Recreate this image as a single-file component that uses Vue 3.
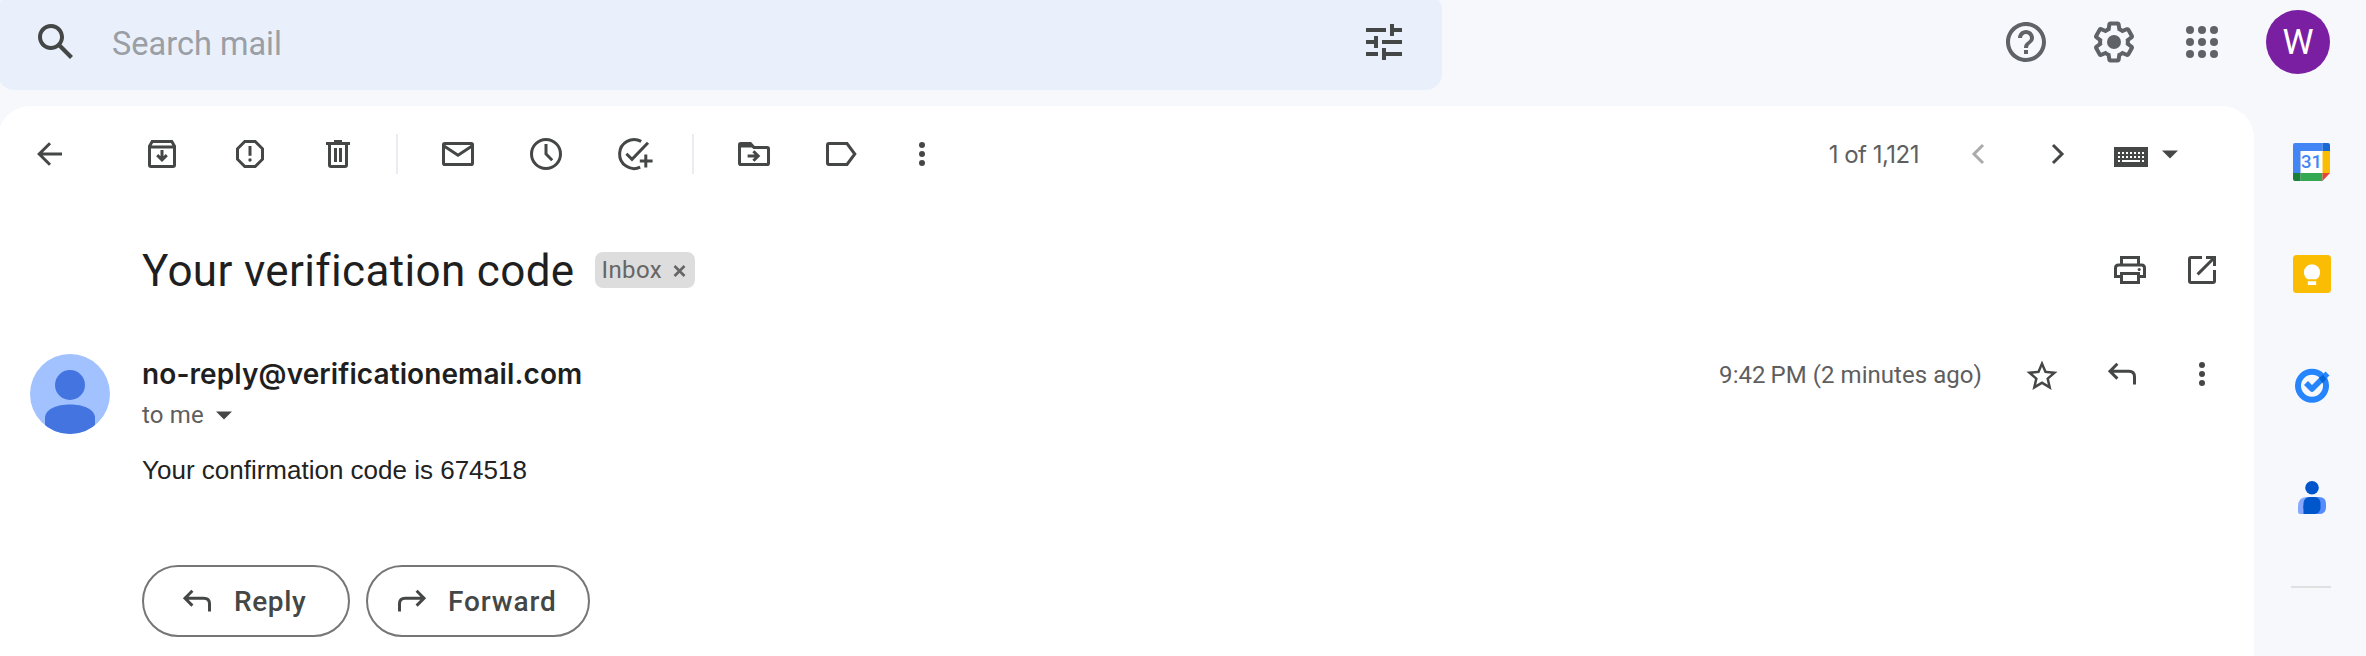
<script setup>
const icons = {
  back: '<path d="M16 10H4.8M10 4.6 4.6 10l5.4 5.4"/>',
  archive: '<path d="M3.75 6.1v9.4q0 .75.75.75h11q.75 0 .75-.75V6.1L14.9 3.75H5.1zM3.75 6.5h12.5M10 8v4.6M7.6 10.6l2.4 2.3 2.4-2.3"/>',
  spam: '<path d="M7.4 3.75h5.2l3.65 3.65v5.2l-3.65 3.65H7.4L3.75 12.6V7.4z"/><path d="M10 6v4.9"/><circle cx="10" cy="13" r=".85" class="f"/>',
  trash: '<path d="M5.75 5v10.5q0 .75.75.75h7q.75 0 .75-.75V5M4 4.75h12M8 3.75h4M8.75 7v7M11.25 7v7"/>',
  mail: '<path d="M3.4 4.75h13.2q.65 0 .65.65v9.2q0 .65-.65.65H3.4q-.65 0-.65-.65V5.4q0-.65.65-.65zM3 6l7 4.6L17 6"/>',
  clock: '<circle cx="10" cy="10" r="7.25"/><path d="M10 5v5l3.1 3.1"/>',
  task: '<path d="M13.6 3.7A7.25 7.25 0 1 0 13.1 16.6M6.2 9.9 9 12.7l8-8.3"/><path d="M15.9 10.3v6.4M12.9 13.5h6.4"/>',
  move: '<path d="M3.4 4.75h4.8l1.8 2h6.6q.65 0 .65.65v7.2q0 .65-.65.65H3.4q-.65 0-.65-.65V5.4q0-.65.65-.65z"/><path class="f" d="M2.6 4.6h5.6L10 6.8H2.6z"/><path d="M6.8 11h5.2M9.7 8.6l2.4 2.4-2.4 2.4"/>',
  label: '<path d="M3.5 4.75h9l3.9 5.25-3.9 5.25h-9q-.75 0-.75-.75v-9q0-.75.75-.75z"/>',
  more: '<g class="f"><circle cx="10" cy="5.5" r="1.5"/><circle cx="10" cy="10" r="1.5"/><circle cx="10" cy="14.5" r="1.5"/></g>',
  prev: '<path d="M12.5 5.5 8 10l4.5 4.5"/>',
  next: '<path d="M7.5 5.5 12 10l-4.5 4.5"/>',
  print: '<path d="M5.75 7V3.75h8.5V7M5.75 13.25h-3V9q0-1.5 1.5-1.5h11.5q1.5 0 1.5 1.5v4.25h-3M5.75 11.75h8.5v4.5h-8.5z"/><circle cx="14.6" cy="9.75" r=".75" class="f"/>',
  open: '<path d="M10 3.75H4.5q-.75 0-.75.75v11q0 .75.75.75h11q.75 0 .75-.75V10M12 3.75h4.25V8M16 4 7.8 12.2"/>',
  star: '<path class="f" transform="translate(.7 1.7) scale(.775)" d="M22 9.24l-7.19-.62L12 2 9.19 8.63 2 9.24l5.46 4.73L5.82 21 12 17.27 18.18 21l-1.63-7.03L22 9.24zM12 15.4l-3.76 2.27 1-4.28-3.32-2.88 4.38-.38L12 6.1l1.71 4.04 4.38.38-3.32 2.88 1 4.28L12 15.4z"/>',
  reply: '<path d="M7.7 4.9 4 8.6l3.7 3.7M4.2 8.6h9.2q2.85 0 2.85 2.85v3.85"/>',
  forward: '<path d="M12.3 4.9 16 8.6l-3.7 3.7M15.8 8.6H6.6q-2.85 0-2.85 2.85v3.85"/>'
}
const groups = [['archive', 'spam', 'trash'], ['mail', 'clock', 'task'], ['move', 'label']]
const keyCols = [0, 1, 2, 3, 4, 5, 6]
const dots = [6, 12, 18]
</script>

<template>
  <div class="app">
    <header class="header">
      <div class="search">
        <svg class="big dark" viewBox="0 0 24 24"><path d="M20.49,19l-5.73-5.73C15.53,12.2,16,10.91,16,9.5C16,5.91,13.09,3,9.5,3S3,5.91,3,9.5C3,13.09,5.91,16,9.5,16c1.41,0,2.7-0.47,3.77-1.24L19,20.49L20.49,19z M5,9.5C5,7.01,7.01,5,9.5,5S14,7.01,14,9.5S11.99,14,9.5,14S5,11.99,5,9.5z"/></svg>
        <span class="placeholder">Search mail</span>
        <svg class="big dark" viewBox="0 0 24 24"><path d="M3 17v2h6v-2H3zM3 5v2h10V5H3zm10 16v-2h8v-2h-8v-2h-2v6h2zM7 9v2H3v2h4v2h2V9H7zm14 4v-2H11v2h10zm-6-4h2V7h4V5h-4V3h-2v6z"/></svg>
      </div>
      <div class="tools">
        <svg class="big" viewBox="0 0 24 24"><path d="M11 18h2v-2h-2v2zm1-16C6.48 2 2 6.48 2 12s4.48 10 10 10 10-4.48 10-10S17.52 2 12 2zm0 18c-4.41 0-8-3.59-8-8s3.59-8 8-8 8 3.59 8 8-3.59 8-8 8zm0-14c-2.21 0-4 1.79-4 4h2c0-1.1.9-2 2-2s2 .9 2 2c0 2-3 1.75-3 5h2c0-2.25 3-2.5 3-5 0-2.21-1.79-4-4-4z"/></svg>
        <svg class="big" viewBox="0 0 24 24"><path d="M13.85 22.25h-3.7c-.74 0-1.36-.54-1.45-1.27l-.27-1.89c-.27-.14-.53-.29-.79-.46l-1.8.72c-.7.26-1.47-.03-1.81-.65L2.2 15.53c-.35-.66-.2-1.44.36-1.88l1.53-1.19c-.01-.15-.02-.3-.02-.46 0-.15.01-.31.02-.46l-1.52-1.19c-.59-.45-.74-1.26-.37-1.88l1.85-3.19c.34-.62 1.11-.9 1.79-.63l1.81.73c.26-.17.52-.32.78-.46l.27-1.91c.09-.7.71-1.25 1.44-1.25h3.7c.74 0 1.36.54 1.45 1.27l.27 1.89c.27.14.53.29.79.46l1.8-.72c.71-.26 1.48.03 1.82.65l1.84 3.18c.36.66.2 1.44-.36 1.88l-1.52 1.19c.01.15.02.3.02.46s-.01.31-.02.46l1.52 1.19c.56.45.72 1.23.37 1.86l-1.86 3.22c-.34.62-1.11.9-1.8.63l-1.8-.72c-.26.17-.52.32-.78.46l-.27 1.91c-.1.68-.72 1.22-1.46 1.22zm-3.23-2h2.76l.37-2.55.53-.22c.44-.18.88-.44 1.34-.78l.45-.34 2.38.96 1.38-2.4-2.03-1.58.07-.56c.03-.26.06-.51.06-.78s-.03-.53-.06-.78l-.07-.56 2.03-1.58-1.39-2.4-2.39.96-.45-.35c-.42-.32-.87-.58-1.33-.77l-.52-.22-.37-2.55h-2.76l-.37 2.55-.53.21c-.44.19-.88.44-1.34.79l-.45.33-2.38-.95-1.39 2.39 2.03 1.58-.07.56a7 7 0 0 0-.06.79c0 .26.02.53.06.78l.07.56-2.03 1.58 1.38 2.4 2.39-.96.45.35c.43.33.86.58 1.33.77l.53.22.38 2.55z"/><circle cx="12" cy="12" r="3.5"/></svg>
        <svg class="big" viewBox="0 0 24 24"><template v-for="y in dots" :key="y"><circle v-for="x in dots" :key="x" :cx="x" :cy="y" r="2"/></template></svg>
        <div class="profile"><span>W</span></div>
      </div>
    </header>

    <div class="body">
      <main class="panel">
        <div class="toolbar">
          <svg class="ic" viewBox="0 0 20 20" v-html="icons.back"></svg>
          <div v-for="(g, i) in groups" :key="i" class="group">
            <svg v-for="n in g" :key="n" class="ic" viewBox="0 0 20 20" v-html="icons[n]"></svg>
          </div>
          <svg class="ic" viewBox="0 0 20 20" v-html="icons.more"></svg>
          <span class="count">1 of 1,121</span>
          <svg class="ic prev" viewBox="0 0 20 20" v-html="icons.prev"></svg>
          <svg class="ic next" viewBox="0 0 20 20" v-html="icons.next"></svg>
          <svg class="keyboard" width="34" height="20" viewBox="0 0 34 20">
            <path fill="#444746" d="M0 0h34v20H0z"/>
            <g fill="#fff">
              <template v-for="k in keyCols" :key="k">
                <rect :x="4 + k * 4" y="5" width="2" height="2"/><rect :x="4 + k * 4" y="9" width="2" height="2"/>
              </template>
              <path d="M4 13h2v2H4zM28 13h2v2h-2zM8 13h18v2H8z"/>
            </g>
          </svg>
          <svg class="caret" width="16" height="9" viewBox="0 0 16 9"><path d="M0 .5h16L8 8.5z"/></svg>
        </div>

        <div class="subject">
          <h1>Your verification code</h1>
          <div class="chip"><span>Inbox</span><svg width="13" height="12" viewBox="0 0 13 12"><path d="M1.5 1l10 10M11.5 1l-10 10"/></svg></div>
          <svg class="ic print" viewBox="0 0 20 20" v-html="icons.print"></svg>
          <svg class="ic" viewBox="0 0 20 20" v-html="icons.open"></svg>
        </div>

        <article class="message">
          <svg class="face" viewBox="0 0 80 80">
            <defs><clipPath id="disc"><circle cx="40" cy="40" r="40"/></clipPath></defs>
            <circle cx="40" cy="40" r="40" fill="#a1c2fe"/>
            <g fill="#4374e0" clip-path="url(#disc)"><circle cx="40" cy="31" r="15"/><path d="M15 80V64C15 55 27 50.500 40 50.500S65 55 65 64v16z"/></g>
          </svg>
          <div class="content">
            <div class="from">
              <h2>no-reply@verificationemail.com</h2>
              <span class="date">9:42&#8201;PM (2 minutes ago)</span>
              <svg class="ic" viewBox="0 0 20 20" v-html="icons.star"></svg>
              <svg class="ic" viewBox="0 0 20 20" v-html="icons.reply"></svg>
              <svg class="ic" viewBox="0 0 20 20" v-html="icons.more"></svg>
            </div>
            <div class="to"><span>to me</span><svg class="caret" width="16" height="9" viewBox="0 0 16 9"><path d="M0 .5h16L8 8.500z"/></svg></div>
            <p class="text">Your confirmation code is 674518</p>
            <div class="actions">
              <button class="reply"><svg class="ic" viewBox="0 0 20 20" v-html="icons.reply"></svg><span>Reply</span></button>
              <button class="forward"><svg class="ic" viewBox="0 0 20 20" v-html="icons.forward"></svg><span>Forward</span></button>
            </div>
          </div>
        </article>
      </main>

      <aside class="side">
        <svg viewBox="0 0 38 38">
          <path fill="#fff" d="M7 7h23v23H7z"/>
          <path fill="#4285f4" d="M2 0h27.500v8H7.500v22H0V2q0-2 2-2z"/>
          <path fill="#1967d2" d="M29.500 0H35q2 0 2 2v6h-7.500z"/>
          <path fill="#fbbc04" d="M29.500 8H37v22h-7.500z"/>
          <path fill="#34a853" d="M7.500 30h22v8h-22z"/>
          <path fill="#188038" d="M0 30h7.500v8H2q-2 0-2-2z"/>
          <path fill="#ea4335" d="M29.500 30H37l-7.500 8z"/>
          <text x="18.500" y="25.300" text-anchor="middle">31</text>
        </svg>
        <svg viewBox="0 0 38 38">
          <rect width="38" height="38" rx="3.500" fill="#fbbc04"/>
          <path fill="#fff" d="M14.500 24.300a8.200 8.200 0 1 1 9 0zM14.800 26.300h8.400v3.700h-8.400z"/>
        </svg>
        <svg viewBox="0 0 38 38">
          <circle cx="19" cy="18.800" r="14" fill="none" stroke="#2684fc" stroke-width="6"/>
          <path d="M13 16.100l6 6L34.500 6.600" fill="none" stroke="#2684fc" stroke-width="5.600" stroke-linejoin="round"/>
          <path fill="#0066da" d="M25.800 11.200l4.300-3.400 3.300 4.200-3.600 4z"/>
        </svg>
        <svg viewBox="0 0 38 38">
          <circle cx="19" cy="8.800" r="6.800" fill="#0057cc"/>
          <path fill="#86a9ff" d="M13.500 18H18v17H7q-2 0-2-2v-5q0-10 8.500-10z"/>
          <path fill="#578cff" d="M18 18h8q7 0 7 7v3q0 7-7 7h-8z"/>
          <rect x="10.500" y="18" width="17" height="17" rx="6" fill="#0057cc"/>
          <path fill="#0057cc" d="M10.500 26h9v9h-9z"/>
        </svg>
        <hr>
      </aside>
    </div>
  </div>
</template>

<style>
body { margin: 0; overflow: hidden; }
</style>

<style scoped>
.app { width: 2366px; height: 656px; overflow: hidden; background: #f6f8fc; font-family: Roboto, "Liberation Sans", sans-serif; color: #1f1f1f; display: flex; flex-direction: column; }
svg { flex: none; display: block; }
.header { height: 96px; margin: -6px 36px 16px -2px; flex: none; display: flex; align-items: center; justify-content: space-between; }
.search { box-sizing: border-box; width: 1444px; height: 96px; border-radius: 16px; background: #e9f0fb; padding: 0 34px; display: flex; align-items: center; }
.big { width: 48px; height: 48px; fill: #5f6368; }
.big.dark { fill: #444746; }
.placeholder { flex: 1; margin-left: 32px; font-size: 32.5px; line-height: 40px; padding-top: 3px; color: #9a9ea5; }
.tools { display: flex; align-items: center; gap: 40px; }
.profile { width: 64px; height: 64px; border-radius: 50%; background: #7b1fa2; color: #fff; font-size: 35px; display: flex; align-items: center; justify-content: center; padding-top: 1px; box-sizing: border-box; }
.body { flex: 1; display: flex; }
.panel { width: 2256px; margin-left: -2px; flex: none; background: #fff; border-radius: 32px 32px 0 0; }
.ic { width: 40px; height: 40px; fill: none; stroke: #444746; stroke-width: 1.5; }
.ic :deep(.f) { fill: #444746; stroke: none; }
.toolbar { height: 96px; display: flex; align-items: center; padding: 0 76px 0 32px; }
.group { display: flex; gap: 48px; }
.group:nth-of-type(1) { margin-left: 72px; }
.group + .group { margin-left: 38px; padding-left: 42px; background: linear-gradient(#e9ecf1, #e9ecf1) left / 2px 100% no-repeat; }
.group:last-of-type { margin-right: 40px; }
.count { margin-left: auto; margin-right: 39px; padding-top: 1px; font: 24px/32px Inter, sans-serif; letter-spacing: -.5px; color: #5e5e5e; }
.prev { opacity: .45; margin-right: 40px; }
.keyboard { margin-left: 36px; margin-top: 5px; }
.caret { fill: #444746; }
.toolbar .caret { margin-left: 14px; }
.subject { height: 136px; display: flex; align-items: center; gap: 32px; padding: 0 32px 0 144px; }
h1 { margin: 0; padding-top: 1px; font-size: 44px; font-weight: 400; line-height: 56px; letter-spacing: .35px; }
.chip { height: 36px; margin-left: -12px; padding: 0 9px 0 7px; border-radius: 8px; background: #ddd; color: #666; font-size: 24px; letter-spacing: .4px; display: flex; align-items: center; gap: 11px; }
.chip svg { stroke: #666; stroke-width: 2.6; margin-top: 2px; }
.print { margin-left: auto; }
.message { display: flex; padding: 16px 32px 0; }
.face { width: 80px; height: 80px; margin-right: 32px; }
.content { flex: 1; }
.from { height: 40px; display: flex; align-items: center; gap: 40px; }
h2 { margin: 0; font: 600 28px/36px Inter, sans-serif; letter-spacing: .1px; }
.date { margin-left: auto; padding-top: 1px; font-size: 24px; letter-spacing: .05px; color: #5e5e5e; }
.to { height: 42px; display: flex; align-items: center; gap: 12px; font-size: 24px; letter-spacing: .15px; color: #5e5e5e; }
.text { margin: 19px 0 79px; font: 26px/31px "Liberation Sans", sans-serif; color: #222; }
.actions { display: flex; gap: 16px; }
button { box-sizing: border-box; height: 72px; border: 2px solid #747775; border-radius: 36px; background: none; padding: 0; display: flex; align-items: center; font: 500 28px Roboto, sans-serif; color: #444746; }
.reply { width: 208px; padding-left: 33px; gap: 17px; letter-spacing: .6px; }
.forward { width: 224px; padding-left: 24px; gap: 16px; letter-spacing: .88px; }
.side { flex: 1; display: flex; flex-direction: column; gap: 74px; padding: 37px 0 0 39px; }
.side svg { width: 38px; height: 38px; }
.side text { font: 500 18.5px Roboto, sans-serif; fill: #4285f4; }
hr { width: 40px; height: 2px; margin: -5px 0 0 -2px; border: 0; background: #e0e0e0; }
</style>
